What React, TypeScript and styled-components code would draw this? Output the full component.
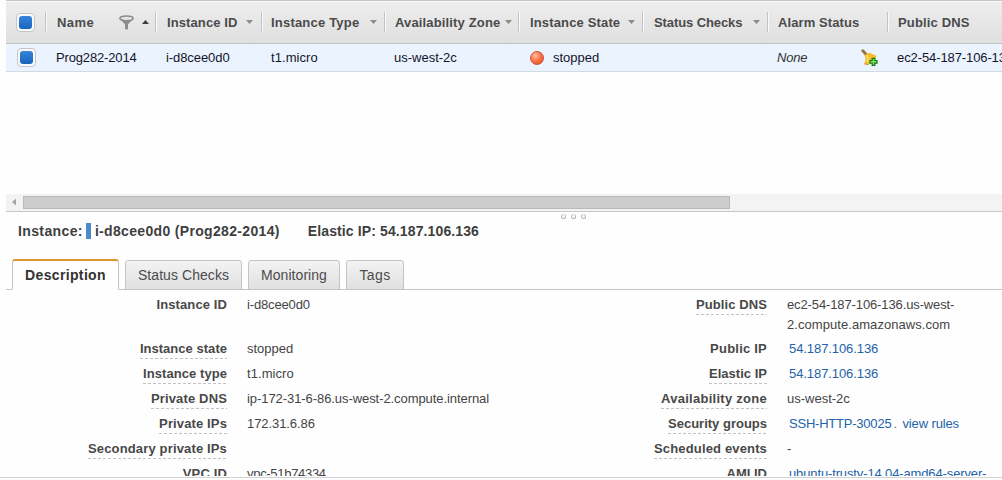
import React from 'react';
import styled, { createGlobalStyle } from 'styled-components';

const GlobalStyle = createGlobalStyle`
  * { box-sizing: border-box; }
  body { margin: 0; background: #fff; overflow: hidden; }
`;

const Page = styled.div`
  width: 1002px;
  height: 480px;
  overflow: hidden;
  font-family: "Liberation Sans", Arial, sans-serif;
  font-size: 13px;
  color: #444;
  background: #fefefe;
`;

const Text = styled.span<{ $track?: number }>`
  letter-spacing: ${p => p.$track ?? 0}px;
  white-space: pre;
`;

/* Instance table */

const TablePane = styled.section`
  height: 194px;
  margin-left: 6px;
  overflow: hidden;
`;

const HeaderRow = styled.div`
  display: flex;
  align-items: center;
  height: 44px;
  width: 1100px;
  border-top: 1px solid #c6c6c6;
  border-bottom: 1px solid #c4c4c4;
  box-shadow: inset 0 1px 0 #f8f8f8;
  background: linear-gradient(#eeeeee, #dfdfdf);
`;

const InstanceRow = styled.div`
  display: flex;
  align-items: center;
  height: 28px;
  width: 1100px;
  background: #eaf3fe;
  border-bottom: 1px solid #d3dae2;
  color: #15152a;
`;

const CheckCell = styled.div<{ $inset: number }>`
  flex: none;
  width: 39px;
  padding-left: ${p => p.$inset}px;
`;

const HeaderCell = styled.div<{ $width: number; $inset: number }>`
  flex: none;
  display: flex;
  align-items: center;
  width: ${p => p.$width}px;
  height: 20px;
  padding: 0 5px 0 ${p => p.$inset}px;
  border-left: 1px solid #c3c3c3;
  box-shadow: inset 1px 0 0 #fafafa;
  font-weight: bold;
  color: #4b4b4b;
`;

const HeaderTools = styled.span<{ $right?: number }>`
  display: flex;
  align-items: center;
  gap: 8px;
  margin-left: auto;
  margin-right: ${p => p.$right ?? 0}px;
`;

const Cell = styled.div<{ $width: number; $inset?: number }>`
  flex: none;
  display: flex;
  align-items: center;
  width: ${p => p.$width}px;
  padding: 0 9px 0 ${p => p.$inset ?? 10}px;
`;

const Checkbox = styled.span`
  display: flex;
  align-items: center;
  justify-content: center;
  width: 19px;
  height: 19px;
  border: 1px solid #c3c6ca;
  border-radius: 4px;
  background: #f8f9fa;

  &::after {
    content: "";
    width: 13px;
    height: 13px;
    border-radius: 3px;
    background: linear-gradient(#3785db, #1764bc);
  }
`;

const Caret = styled.span<{ $up?: boolean }>`
  width: 7px;
  height: 4px;
  background: ${p => (p.$up ? '#3c3c3c' : '#8b8b8b')};
  clip-path: ${p => (p.$up ? 'polygon(0 100%, 100% 100%, 50% 0)' : 'polygon(0 0, 100% 0, 50% 100%)')};
`;

const StatusDot = styled.span`
  width: 14px;
  height: 14px;
  margin: 0 9px 0 1px;
  border-radius: 50%;
  border: 1px solid #c9533c;
  background: radial-gradient(circle at 36% 30%, #ffc0a0 0, #fb7a50 42%, #ee4f25 85%);
`;

const Bell = styled.svg`
  margin-left: auto;
`;

const None = styled.em`
  color: #333;
`;

/* Scroll bar and splitter */

const ScrollBar = styled.div`
  display: flex;
  align-items: center;
  height: 18px;
  margin-left: 6px;
  padding: 0 0 1px 6px;
  background: #f3f3f3;
  border-bottom: 1px solid #c6c6c6;
`;

const ScrollArrow = styled.span`
  width: 4px;
  height: 7px;
  background: #a6a6a6;
  clip-path: polygon(100% 0, 100% 100%, 0 50%);
`;

const Thumb = styled.span`
  width: 707px;
  height: 13px;
  margin-left: 7px;
  border: 1px solid #bababa;
  background: #cdcdcd;
`;

const Grip = styled.div`
  display: flex;
  gap: 5px;
  height: 8px;
  padding: 2px 0 0 561px;
`;

const GripDot = styled.span`
  width: 5px;
  height: 5px;
  border-radius: 50%;
  border: 1px solid #b4b4b4;
  border-top-color: #d8d8d8;
`;

/* Details pane */

const Title = styled.div`
  display: flex;
  align-items: center;
  height: 22px;
  padding-left: 18px;
  font-size: 14px;
  font-weight: bold;
  color: #3f3f3f;
`;

const TitleMark = styled.span`
  width: 5px;
  height: 16px;
  margin: 0 4px 0 3px;
  background: #4a8bca;
`;

const TitleExtra = styled.span`
  margin-left: 28px;
`;

const TabBar = styled.div`
  display: flex;
  align-items: flex-end;
  gap: 6px;
  height: 48px;
  margin-left: 6px;
  padding-left: 6px;
  box-shadow: inset 0 -1px 0 #c4c4c4;
`;

const Tab = styled.div<{ $width: number; $active?: boolean }>`
  display: flex;
  align-items: center;
  justify-content: center;
  width: ${p => p.$width}px;
  height: ${p => (p.$active ? 31 : 30)}px;
  border: 1px solid #c4c4c4;
  border-top: ${p => (p.$active ? '2px solid #de972f' : '1px solid #c4c4c4')};
  border-bottom-color: ${p => (p.$active ? '#fefefe' : '#c4c4c4')};
  border-radius: 3px 3px 0 0;
  background: ${p => (p.$active ? '#fefefe' : 'linear-gradient(#f3f3f3, #e0e0e0)')};
  font-size: 14px;
  font-weight: ${p => (p.$active ? 'bold' : 'normal')};
  color: ${p => (p.$active ? '#333' : '#4c4c4c')};
`;

const Details = styled.div`
  display: grid;
  grid-template-columns: 227px 440px 100px 235px;
  grid-template-rows: 44px;
  grid-auto-rows: 25px;
  height: 186px;
  padding-top: 5px;
  overflow: hidden;
  line-height: 20px;
`;

const Label = styled.div`
  display: flex;
  justify-content: flex-end;
  align-items: flex-start;
  font-weight: bold;
  color: #484848;
`;

const Term = styled(Text)<{ $dashed?: boolean }>`
  flex: none;
  height: 20px;
  background: ${p =>
    p.$dashed ? 'repeating-linear-gradient(90deg, #c2c2c2 0 3px, transparent 3px 5px) 0 100% / 100% 1px no-repeat' : 'none'};
`;

const Value = styled.div<{ $link?: boolean }>`
  padding-left: ${p => (p.$link ? 22 : 20)}px;
`;

const Line = styled(Text)`
  display: block;
`;

const Link = styled.a<{ $track?: number }>`
  color: #2463a8;
  letter-spacing: ${p => p.$track ?? 0}px;
  white-space: pre;
`;

const Separator = styled.span`
  display: inline-block;
  width: 11px;
  padding-left: 2px;
  color: #777;
`;

const Footer = styled.footer`
  height: 4px;
  padding-top: 1px;

  &::before {
    content: "";
    display: block;
    height: 1px;
    background: #d2d2d2;
  }
`;

const columns = [
  { label: 'Name', width: 110, inset: 11, track: 0.4 },
  { label: 'Instance ID', width: 106, inset: 11, track: 0.1 },
  { label: 'Instance Type', width: 123, inset: 9, track: 0.2 },
  { label: 'Availability Zone', width: 134, inset: 10, track: 0.15 },
  { label: 'Instance State', width: 124, inset: 11, track: 0.15 },
  { label: 'Status Checks', width: 125, inset: 11, track: -0.1 },
  { label: 'Alarm Status', width: 120, inset: 10, track: 0.1 },
  { label: 'Public DNS', width: 180, inset: 10, track: 0.15 },
];

/* distance of each column's sort caret from the cell's right padding */
const caretInset: Record<string, number> = {
  'Instance ID': 3,
  'Instance Type': 2,
  'Availability Zone': 1,
  'Instance State': 2,
  'Status Checks': 2,
};

const FunnelIcon = () => (
  <svg width="15" height="15" viewBox="0 0 15 15">
    <path d="M0.3 3.5 6 9.3V13.6q0 1 1 1h1q1 0 1-1V9.3L14.7 3.5z" fill="#8c8c8c" />
    <ellipse cx="7.5" cy="3.3" rx="6.6" ry="2.4" fill="#e6e6e6" stroke="#8c8c8c" strokeWidth="1.5" />
  </svg>
);

const BellIcon = () => (
  <Bell width="17" height="17" viewBox="0 0 17 17">
    <path d="M1.8 1.8 5 5.2" stroke="#94763c" strokeWidth="3" strokeLinecap="round" />
    <path d="M3.6 6.4Q5.8 3.4 9.2 4L15.4 6.8 14.8 9.6 6 15.6 3.2 14.8Q5.4 10.4 3.6 6.4z" fill="#f3bd2c" />
    <path d="M5.6 6.4Q8 9 6.6 13" stroke="#fbdc72" strokeWidth="1.6" fill="none" />
    <path d="M3.2 14.8 7 15.6 9.6 13.4" stroke="#d2932a" fill="none" />
    <path d="M11.2 9.3h2.6v2.2H16v2.6h-2.2v2.2h-2.6v-2.2H9v-2.6h2.2z" fill="#7be35c" stroke="#147a12" strokeWidth="1.2" />
  </Bell>
);

export default function App() {
  return (
    <Page>
      <GlobalStyle />
      <TablePane>
        <HeaderRow>
          <CheckCell $inset={10}><Checkbox /></CheckCell>
          {columns.map(c => (
            <HeaderCell key={c.label} $width={c.width} $inset={c.inset}>
              <Text $track={c.track}>{c.label}</Text>
              {c.label === 'Name' && (
                <HeaderTools $right={1}><FunnelIcon /><Caret $up /></HeaderTools>
              )}
              {caretInset[c.label] !== undefined && (
                <HeaderTools $right={caretInset[c.label]}><Caret /></HeaderTools>
              )}
            </HeaderCell>
          ))}
        </HeaderRow>
        <InstanceRow>
          <CheckCell $inset={11}><Checkbox /></CheckCell>
          <Cell $width={110} $inset={11}><Text $track={-0.15}>Prog282-2014</Text></Cell>
          <Cell $width={106} $inset={11}><Text $track={-0.08}>i-d8cee0d0</Text></Cell>
          <Cell $width={123}><Text $track={0.07}>t1.micro</Text></Cell>
          <Cell $width={134}><Text>us-west-2c</Text></Cell>
          <Cell $width={124} $inset={11}><StatusDot /><Text>stopped</Text></Cell>
          <Cell $width={125} />
          <Cell $width={120}><None><Text $track={-0.2}>None</Text></None><BellIcon /></Cell>
          <Cell $width={180}><Text $track={-0.1}>ec2-54-187-106-136</Text></Cell>
        </InstanceRow>
      </TablePane>

      <ScrollBar><ScrollArrow /><Thumb /></ScrollBar>
      <Grip><GripDot /><GripDot /><GripDot /></Grip>

      <Title>
        <Text $track={0.38}>Instance:</Text>
        <TitleMark />
        <Text $track={0.33}>i-d8cee0d0 (Prog282-2014)</Text>
        <TitleExtra><Text $track={0.12}>Elastic IP: 54.187.106.136</Text></TitleExtra>
      </Title>

      <TabBar>
        <Tab $width={107} $active><Text $track={0.35}>Description</Text></Tab>
        <Tab $width={117}><Text $track={0.07}>Status Checks</Text></Tab>
        <Tab $width={92}><Text $track={0.05}>Monitoring</Text></Tab>
        <Tab $width={58}><Text $track={0.4}>Tags</Text></Tab>
      </TabBar>

      <Details>
        <Label><Term $track={0.1}>Instance ID</Term></Label>
        <Value><Text $track={-0.15}>i-d8cee0d0</Text></Value>
        <Label><Term $dashed $track={0.1}>Public DNS</Term></Label>
        <Value>
          <Line $track={-0.12}>ec2-54-187-106-136.us-west-</Line>
          <Line $track={0.06}>2.compute.amazonaws.com</Line>
        </Value>

        <Label><Term $dashed $track={0.03}>Instance state</Term></Label>
        <Value><Text>stopped</Text></Value>
        <Label><Term $track={0.22}>Public IP</Term></Label>
        <Value $link><Link $track={-0.08}>54.187.106.136</Link></Value>

        <Label><Term $dashed $track={0.07}>Instance type</Term></Label>
        <Value><Text $track={0.07}>t1.micro</Text></Value>
        <Label><Term $dashed $track={0.02}>Elastic IP</Term></Label>
        <Value $link><Link $track={-0.08}>54.187.106.136</Link></Value>

        <Label><Term $dashed $track={0.15}>Private DNS</Term></Label>
        <Value><Text $track={-0.07}>ip-172-31-6-86.us-west-2.compute.internal</Text></Value>
        <Label><Term $dashed $track={0.27}>Availability zone</Term></Label>
        <Value><Text>us-west-2c</Text></Value>

        <Label><Term $dashed $track={0.13}>Private IPs</Term></Label>
        <Value><Text $track={-0.08}>172.31.6.86</Text></Value>
        <Label><Term $dashed>Security groups</Term></Label>
        <Value $link>
          <Link $track={-0.22}>SSH-HTTP-30025</Link>
          <Separator>.</Separator>
          <Link $track={-0.12}>view rules</Link>
        </Value>

        <Label><Term $dashed $track={0.15}>Secondary private IPs</Term></Label>
        <Value />
        <Label><Term $dashed $track={0.15}>Scheduled events</Term></Label>
        <Value>-</Value>

        <Label><Term $track={0.15}>VPC ID</Term></Label>
        <Value><Text $track={-0.3}>vpc-51b74334</Text></Value>
        <Label><Term>AMI ID</Term></Label>
        <Value $link><Link $track={-0.13}>ubuntu-trusty-14.04-amd64-server-</Link></Value>
      </Details>
      <Footer />
    </Page>
  );
}
